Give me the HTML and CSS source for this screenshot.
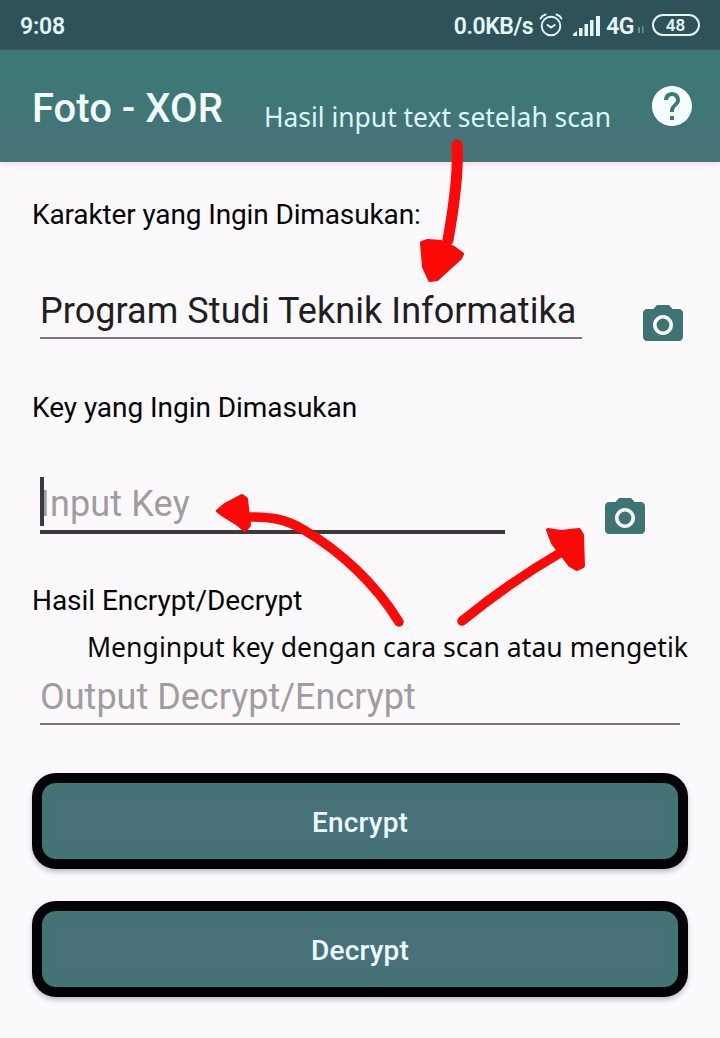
FILE: index.html
```html
<!DOCTYPE html>
<html lang="id">
<head>
<meta charset="utf-8">
<title>Foto - XOR</title>
<link rel="stylesheet" href="styles.css">
</head>
<body>
<svg class="defs" width="0" height="0" aria-hidden="true">
  <symbol id="camera" viewBox="0 0 24 24">
    <circle cx="12" cy="12" r="3.2"/>
    <path d="M9 2 7.170 4H4c-1.100 0-2 .9-2 2v12c0 1.100.9 2 2 2h16c1.100 0 2-.9 2-2V6c0-1.100-.9-2-2-2h-3.170L15 2H9zm3 15c-2.760 0-5-2.240-5-5s2.240-5 5-5 5 2.240 5 5-2.240 5-5 5z"/>
  </symbol>
</svg>
<div class="screen">
  <header class="status">
    <span class="time">9:08</span>
    <div class="indicators">
      <span class="speed">0.0KB/s</span>
      <svg class="alarm" width="24" height="24" viewBox="0 0 24 24" fill="none" stroke="#e2f6f8" stroke-width="1.900" stroke-linecap="round">
        <circle cx="12" cy="13" r="9.300"/>
        <path d="M1.500 5.500Q3 2.500 6.500 1.500M17.500 1.500Q21 2.500 22.500 5.500M8.500 12l3.500 2.600 3.800-2.600"/>
      </svg>
      <svg class="signal" width="28" height="20" viewBox="0 0 28 20" fill="#e2f6f8">
        <path d="M0 20v-2l4-3v5zM6 12h3.500v8H6zM11.500 8H15v12h-3.500zM17 4h3.500v16H17zM23 0h4v20h-4z"/>
      </svg>
      <span class="network">4G</span>
      <svg class="data" width="8" height="8" viewBox="0 0 8 8" fill="#6e8b93"><path d="M1 1h2v6H1zM5 0h1.500v7H5z"/></svg>
      <span class="battery">48</span>
    </div>
  </header>
  <div class="appbar">
    <h1 class="title">Foto - XOR</h1>
    <svg class="help" width="48" height="48" viewBox="0 0 24 24" fill="#f4feff">
      <path d="M12 2C6.480 2 2 6.480 2 12s4.480 10 10 10 10-4.480 10-10S17.520 2 12 2zm1 17h-2v-2h2v2zm2.070-7.750-.9.920C13.450 12.900 13 13.500 13 15h-2v-.5c0-1.100.45-2.100 1.170-2.830l1.240-1.260c.37-.36.59-.86.59-1.410 0-1.100-.9-2-2-2s-2 .9-2 2H8c0-2.210 1.790-4 4-4s4 1.790 4 4c0 .88-.36 1.680-.93 2.250z"/>
    </svg>
  </div>
  <main class="form">
    <section class="group">
      <div class="label l1">Karakter yang Ingin Dimasukan:</div>
      <div class="row">
        <div class="field filled"><span class="value">Program Studi Teknik Informatika</span></div>
        <svg class="camera first" width="48" height="48"><use href="#camera"/></svg>
      </div>
    </section>
    <section class="group">
      <div class="label l2">Key yang Ingin Dimasukan</div>
      <div class="row">
        <div class="field focused"><span class="value">Input Key</span></div>
        <svg class="camera second" width="48" height="48"><use href="#camera"/></svg>
      </div>
    </section>
    <section class="group last">
      <div class="label l3">Hasil Encrypt/Decrypt</div>
      <div class="row">
        <div class="field output"><span class="value">Output Decrypt/Encrypt</span></div>
      </div>
    </section>
    <div class="actions">
      <button class="action">Encrypt</button>
      <button class="action">Decrypt</button>
    </div>
  </main>
  <svg class="notes" width="720" height="1038" viewBox="0 0 720 1038">
    <g class="arrows">
      <path class="shaft" d="M457 145C459 175 453 212 448 240"/>
      <path class="head" d="M422 243 428 241 441 242 454 248 462 254 460 258 437 279 430 280 424 267z"/>
      <path class="shaft thin" d="M248 517C270 517 284 518 304 530C340 551 375 583 399 622"/>
      <path class="head" d="M218 511 225 505 242 496 246 499 248 517 249 525 245 530 238 524 222 514z"/>
      <path class="shaft thin" d="M462 621Q510 582 560 553"/>
      <path class="head" d="M548 530 561 532 579 530 582 535 583 566 577 569 570 565 561 553 553 543z"/>
    </g>
    <text class="note light" x="264" y="127" textLength="347" lengthAdjust="spacingAndGlyphs">Hasil input text setelah scan</text>
    <text class="note" x="87" y="657" textLength="601" lengthAdjust="spacingAndGlyphs">Menginput key dengan cara scan atau mengetik</text>
  </svg>
</div>
</body>
</html>
```
FILE: styles.css
```css
* { box-sizing: border-box; }
body { margin: 0; font-family: Roboto, "Liberation Sans", sans-serif; }
.defs { display: block; }
.screen { position: relative; width: 720px; height: 1038px; overflow: hidden; background: #fcf9fd; }
.status {
  display: flex; align-items: center; justify-content: space-between;
  height: 50px; padding: 2px 20px 0 20px;
  background: #2f525a; color: #e2f6f8; font-size: 23px; font-weight: 500;
}
.time { font-weight: 600; letter-spacing: -0.2px; }
.indicators { display: flex; align-items: center; }
.speed { margin-right: 6px; letter-spacing: -0.45px; font-weight: 600; }
.alarm { margin-top: -2px; }
.signal { margin: 0 5px 0 10px; }
.network { letter-spacing: -0.5px; font-weight: 600; }
.data { margin: 8px 7px 0 3px; }
.battery {
  width: 48px; height: 22px; margin-top: -2px; border: 2px solid #e2f6f8; border-radius: 11px;
  padding-right: 1px; font-size: 17px; line-height: 18px; font-weight: 600; text-align: center;
}
.appbar {
  display: flex; align-items: center; justify-content: space-between;
  height: 112px; padding: 0 24px 0 32px;
  background: linear-gradient(#3d7875 0%, #3e7775 45%, #48717a 85%, #447473 100%);
  border-top: 1px solid #4a7079;
  box-shadow: 0 2px 5px #d9bcc780;
}
.title { margin: 5px 0 0; color: #f0fdff; font-size: 40px; line-height: 48px; font-weight: 500; }
.help { margin-top: -2px; }
.form { display: flex; flex-direction: column; padding: 36px 32px 0; }
.group { height: 193px; }
.group.last { height: 189px; }
.label { height: 34px; margin-bottom: 56px; font-size: 28px; line-height: 34px; letter-spacing: -0.05px; color: #050406; white-space: nowrap; }
.l1 { letter-spacing: -0.13px; }
.row { display: flex; justify-content: space-between; align-items: flex-start; padding-left: 8px; }
.field { font-size: 36px; line-height: 46px; color: #a09ca0; white-space: nowrap; }
.filled { width: 542px; height: 51px; color: #211e22; border-bottom: 2px solid #7c777c; letter-spacing: 0.06px; }
.focused { position: relative; width: 465px; height: 53px; border-bottom: 4px solid #3d393e; letter-spacing: 0.15px; }
.focused::before { content: ""; position: absolute; left: 0; top: -4px; width: 4px; height: 49px; background: #3d393e; }
.output { width: 640px; height: 51px; border-bottom: 2px solid #7c717a; }
.camera { fill: #3e7471; flex: none; margin-top: 13px; }
.first { margin-right: 1px; }
.second { margin-right: 39px; }
.actions { display: flex; flex-direction: column; gap: 32px; }
.action {
  height: 96px; padding: 3px 0 0; border: 10px solid #030006; border-radius: 24px;
  background: #48717a; color: #eafcff; font: 500 28px/32px Roboto, sans-serif; letter-spacing: 0.15px;
  box-shadow: 0 3px 5px #77718870, inset 0 0 10px 6px #3e7672;
}
.notes { position: absolute; left: 0; top: 0; pointer-events: none; }
.shaft { fill: none; stroke: #fe0808; stroke-width: 11; stroke-linecap: round; }
.thin { stroke-width: 9.5; }
.head { fill: #fe0808; stroke: #fe0808; stroke-width: 4; stroke-linejoin: round; }
.note { font-family: "Noto Sans", sans-serif; font-size: 27px; fill: #08070a; }
.light { fill: #d9f7fa; }
```
